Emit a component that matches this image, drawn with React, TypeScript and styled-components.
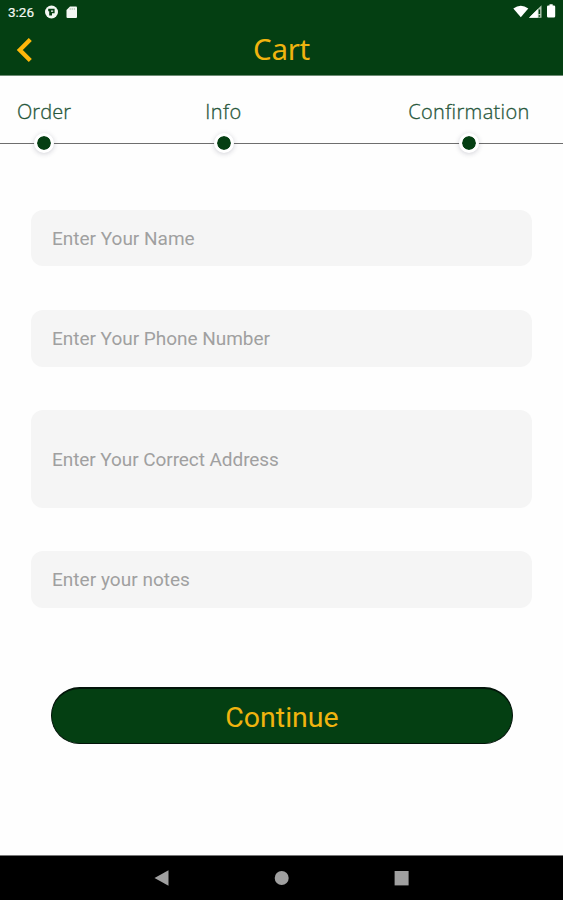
import React from "react";
import styled, { createGlobalStyle } from "styled-components";

const GREEN = "#043f12";
const AMBER = "#f0b40f";

const GlobalStyle = createGlobalStyle`
  *, *::before, *::after { box-sizing: border-box; }
  body { margin: 0; background: #fefefe; }
`;

const Screen = styled.div`
  display: flex;
  flex-direction: column;
  width: 563px;
  height: 900px;
  overflow: hidden;
  background: #fefefe;
  font-family: Roboto, sans-serif;
`;

const Top = styled.header`
  flex: none;
  height: 76px;
  background: ${GREEN};
  border-bottom: 1px solid #6d8b74;
`;

const StatusBar = styled.div`
  display: flex;
  align-items: center;
  height: 24px;
  padding: 0 6px 0 8px;
  color: #f4f8f4;
`;

const Clock = styled.span`
  width: 37px;
  font-size: 13.5px;
  line-height: 25px;
  font-weight: 400;
  -webkit-text-stroke: 0.2px #f4f8f4;
`;

const StatusIcons = styled.div<{ $end?: boolean }>`
  display: flex;
  align-items: center;
  gap: ${(p) => (p.$end ? "0" : "8px")};
  margin-left: ${(p) => (p.$end ? "auto" : "0")};
  svg { display: block; }
`;

const TitleBar = styled.div`
  display: grid;
  grid-template-columns: 60px 1fr 60px;
  align-items: center;
  height: 51px;
`;

const BackButton = styled.button`
  display: flex;
  width: 60px;
  padding: 0 0 0 16px;
  border: 0;
  background: none;
`;

const Title = styled.h1`
  margin: 0;
  padding-bottom: 2px;
  text-align: center;
  color: ${AMBER};
  font: 400 29.5px/49px "Noto Sans", "Open Sans", sans-serif;
  letter-spacing: -0.3px;
`;

const Stepper = styled.ol`
  display: grid;
  grid-template-columns: 88px 271px 220px;
  flex: none;
  height: 82px;
  margin: 0;
  padding: 24px 0 0;
  list-style: none;
  background: linear-gradient(#6e6e6e, #6e6e6e) 0 67px / 100% 1.3px no-repeat;
`;

const Step = styled.li`
  display: flex;
  flex-direction: column;
  align-items: center;
`;

const StepLabel = styled.span<{ $spacing: number }>`
  height: 33px;
  color: #26563a;
  font: 300 20px/24px "Open Sans", "Noto Sans", sans-serif;
  letter-spacing: ${(p) => p.$spacing}px;
  -webkit-text-stroke: 0.3px #26563a;
`;

const StepDot = styled.span`
  width: 20px;
  height: 20px;
  border: 3.5px solid #fff;
  border-radius: 50%;
  background: ${GREEN};
  background-clip: padding-box;
  box-shadow: 0 1px 5px rgba(40, 40, 70, 0.22);
`;

const Form = styled.form`
  display: flex;
  flex-direction: column;
  flex: 1;
  padding: 52px 31px 0;
`;

const Field = styled.input<{ $height: number; $gap: number; $spacing: number }>`
  width: 501px;
  height: ${(p) => p.$height}px;
  margin: 0 0 ${(p) => p.$gap}px;
  padding: 0 21px;
  border: 0;
  border-radius: 12px;
  outline: 0;
  background: #f5f5f5;
  color: #444;
  font: 400 19px Roboto, sans-serif;
  letter-spacing: ${(p) => p.$spacing}px;
  &::placeholder { color: #a0a0a0; opacity: 1; }
`;

const Continue = styled.button`
  width: 462px;
  height: 57px;
  margin: 79px 0 0 20px;
  padding: 4px 0 0;
  border: 1px solid #03150a;
  border-top-width: 2px;
  border-radius: 29px;
  background: ${GREEN};
  color: ${AMBER};
  font: 400 28.5px/50px Roboto, sans-serif;
`;

const NavBar = styled.nav`
  display: flex;
  flex: none;
  align-items: center;
  justify-content: center;
  gap: 104px;
  height: 45px;
  border-top: 1px solid #777;
  background: #000;
  svg { display: block; }
`;

const STEPS = [
  { label: "Order", spacing: 0.1 },
  { label: "Info", spacing: 0.5 },
  { label: "Confirmation", spacing: 0.35 },
];

const FIELDS = [
  { text: "Enter Your Name", height: 56, gap: 44, spacing: 0 },
  { text: "Enter Your Phone Number", height: 57, gap: 43, spacing: -0.02 },
  { text: "Enter Your Correct Address", height: 98, gap: 43, spacing: -0.07 },
  { text: "Enter your notes", height: 57, gap: 0, spacing: 0.03 },
];

export default function App() {
  return (
    <Screen>
      <GlobalStyle />
      <Top>
        <StatusBar>
          <Clock>3:26</Clock>
          <StatusIcons>
            <svg width="13" height="14" viewBox="0 0 13 14">
              <circle cx="6.5" cy="7" r="6.5" fill="#f4f8f4" />
              <path d="M3.2 3.8h6.4v4.4H7v2.3H4.2V6.2h-1zM6 5.4v1.4h2.2V5.4z" fill={GREEN} fillRule="evenodd" />
            </svg>
            <svg width="11" height="13" viewBox="0 0 11 13">
              <path d="M4 .6h6q1 0 1 1v9.5q0 1-1 1H1.5q-1 0-1-1V4.1z" fill="#f4f8f4" />
              <path d="M4.2 2.2v1.6M6.2 2.2v1.6M8.3 2.2v1.6" stroke="#9eb4a2" strokeWidth="0.9" />
            </svg>
          </StatusIcons>
          <StatusIcons $end>
            <svg width="44" height="16" viewBox="0 0 44 16">
              <path d="M.3 4.4Q7.8-.8 15.3 4.4L7.8 13.2z" fill="#fff" />
              <path d="M16 13.8 28.5 1.3v12.5z" fill="#b4c8b4" />
              <path d="M16 13.8 24.8 5v8.8z" fill="#fff" />
              <path d="M26.4 5.5v4.6M26.4 11.3v1.4" stroke={GREEN} strokeWidth="1.5" />
              <path d="M36.5.2h3.2v1.3h1.2q1.3 0 1.3 1.2v9.6q0 1.2-1.3 1.2h-5.6q-1.3 0-1.3-1.2V2.7q0-1.2 1.3-1.2h1.2z" fill="#fff" />
            </svg>
          </StatusIcons>
        </StatusBar>
        <TitleBar>
          <BackButton aria-label="Back">
            <svg width="17" height="26" viewBox="0 0 17 26">
              <path d="M14.3 2.5 3.8 13l10.5 10.5" fill="none" stroke="#ffb70a" strokeWidth="4.3" />
            </svg>
          </BackButton>
          <Title>Cart</Title>
        </TitleBar>
      </Top>
      <Stepper>
        {STEPS.map((s) => (
          <Step key={s.label}>
            <StepLabel $spacing={s.spacing}>{s.label}</StepLabel>
            <StepDot />
          </Step>
        ))}
      </Stepper>
      <Form onSubmit={(e) => e.preventDefault()}>
        {FIELDS.map((f) => (
          <Field key={f.text} placeholder={f.text} $height={f.height} $gap={f.gap} $spacing={f.spacing} />
        ))}
        <Continue type="submit">Continue</Continue>
      </Form>
      <NavBar>
        <svg width="16" height="18" viewBox="0 0 16 18">
          <path d="M.5 9 14.5 1.3v15.4z" fill="#a0a0a0" />
        </svg>
        <svg width="16" height="16" viewBox="0 0 16 16">
          <circle cx="7.7" cy="8" r="7" fill="#a0a0a0" />
        </svg>
        <svg width="16" height="16" viewBox="0 0 16 16">
          <path d="M.6 1h14v14.4h-14z" fill="#a0a0a0" />
        </svg>
      </NavBar>
    </Screen>
  );
}
